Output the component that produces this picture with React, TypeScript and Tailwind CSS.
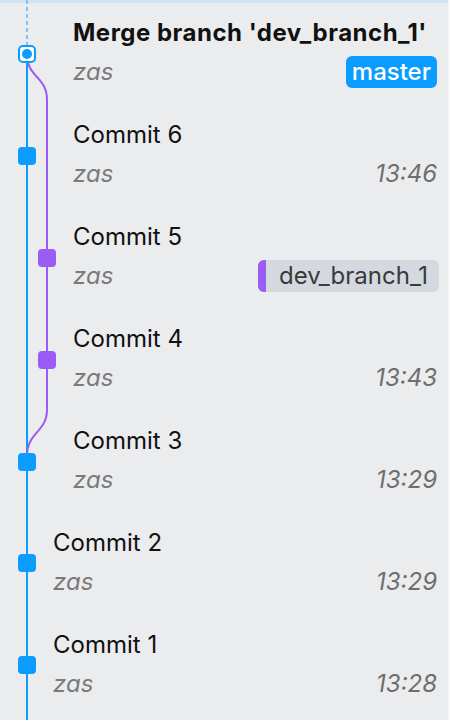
import React from 'react';

type Commit = {
  title: string;
  author: string;
  time?: string;
  badge?: 'master' | 'dev';
  bold?: boolean;
  indent: boolean;
};

const commits: Commit[] = [
  { title: "Merge branch 'dev_branch_1'", author: 'zas', badge: 'master', bold: true, indent: true },
  { title: 'Commit 6', author: 'zas', time: '13:46', indent: true },
  { title: 'Commit 5', author: 'zas', badge: 'dev', indent: true },
  { title: 'Commit 4', author: 'zas', time: '13:43', indent: true },
  { title: 'Commit 3', author: 'zas', time: '13:29', indent: true },
  { title: 'Commit 2', author: 'zas', time: '13:29', indent: false },
  { title: 'Commit 1', author: 'zas', time: '13:28', indent: false },
];

const BLUE = '#0a9cff';
const PURPLE = '#9b5cf6';

const Graph: React.FC = () => (
  <svg className="absolute left-0 top-0" width="60" height="720" viewBox="0 0 60 720">
    <line x1="27" y1="0" x2="27" y2="45" stroke="#7cc3fb" strokeWidth="2" strokeDasharray="4 3" />
    <line x1="27" y1="62" x2="27" y2="720" stroke={BLUE} strokeWidth="2" />
    <path d="M27 54 C 27 78, 47 76, 47 100 L 47 410 C 47 432, 27 432, 27 456" fill="none" stroke={PURPLE} strokeWidth="2" />
    <rect x="19" y="46" width="16" height="16" rx="4" fill="#ffffff" stroke={BLUE} strokeWidth="2" />
    <circle cx="27" cy="54" r="5" fill={BLUE} />
    {[156, 462, 563, 665].map((y) => (
      <rect key={y} x="18" y={y - 9} width="18" height="18" rx="4" fill={BLUE} />
    ))}
    {[258, 360].map((y) => (
      <rect key={y} x="38" y={y - 9} width="18" height="18" rx="4" fill={PURPLE} />
    ))}
  </svg>
);

const Row: React.FC<{ c: Commit }> = ({ c }) => (
  <div className={`h-[102px] pt-[19px] pr-[11px] ${c.indent ? 'pl-[73px]' : 'pl-[53px]'}`}>
    <div
      className={`leading-[28px] text-[24px] whitespace-nowrap text-[#111111] ${
        c.bold ? 'font-bold tracking-[0.5px]' : ''
      }`}
    >
      {c.title}
    </div>
    <div className="mt-[11px] flex items-center justify-between h-[28px]">
      <span className="italic text-[24px] leading-[28px] text-[#7a7a7a]">{c.author}</span>
      {c.time && <span className="italic text-[24px] leading-[28px] text-[#6e6e6e]">{c.time}</span>}
      {c.badge === 'master' && (
        <span className="h-[32px] px-[6px] rounded-[6px] bg-[#0a9cff] text-white text-[24px] leading-[32px] font-medium">
          master
        </span>
      )}
      {c.badge === 'dev' && (
        <span className="h-[32px] -mr-[2px] flex items-stretch rounded-[6px] bg-[#d4d8df] overflow-hidden">
          <span className="w-[8px] bg-[#9b5cf6]" />
          <span className="pl-[13px] pr-[11px] text-[24px] leading-[32px] text-[#3a3a3a]">dev_branch_1</span>
        </span>
      )}
    </div>
  </div>
);

const App: React.FC = () => {
  return (
    <div
      className="relative w-[450px] h-[720px] overflow-hidden bg-[#ebecee] border-r-2 border-[#f7f7f7]"
      style={{ fontFamily: 'Inter, "Noto Sans", sans-serif' }}
    >
      <div className="absolute top-0 left-0 right-0 h-[3px] bg-[#cfe3f4]" />
      <Graph />
      <div className="flex flex-col">
        {commits.map((c) => (
          <Row key={c.title} c={c} />
        ))}
      </div>
    </div>
  );
};

export default App;
